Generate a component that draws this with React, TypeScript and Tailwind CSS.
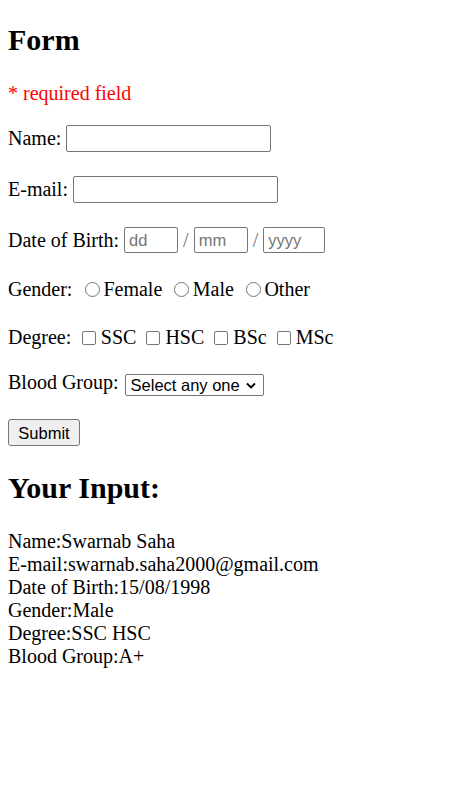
import React from 'react';

const serif = "font-['Liberation_Serif','Times_New_Roman',serif]";
const sans = "font-['Liberation_Sans',Arial,sans-serif]";

const RESULTS = [
  'Name:Swarnab Saha',
  'E-mail:swarnab.saha2000@gmail.com',
  'Date of Birth:15/08/1998',
  'Gender:Male',
  'Degree:SSC HSC',
  'Blood Group:A+',
];

function TextBox({ width, placeholder, className = '' }: { width: string; placeholder?: string; className?: string }) {
  return (
    <input
      type="text"
      placeholder={placeholder}
      className={`${width} ${sans} shrink-0 rounded-[2px] border border-[#767676] bg-white px-[4px] text-[16.5px] text-black outline-none placeholder:text-[#757575] ${className}`}
    />
  );
}

function Radio({ label, first }: { label: string; first?: boolean }) {
  return (
    <label className="flex items-center">
      <span
        className={`${first ? 'ml-[12.5px]' : 'ml-[12px]'} mr-[3.5px] h-[15px] w-[15px] rounded-full border border-[#767676] bg-white`}
      />
      <span>{label}</span>
    </label>
  );
}

function Check({ label, first }: { label: string; first?: boolean }) {
  return (
    <label className="flex items-center">
      <span
        className={`${first ? 'ml-[10.5px]' : 'ml-[10px]'} mr-[5px] h-[14px] w-[14px] rounded-[2px] border border-[#767676] bg-white`}
      />
      <span>{label}</span>
    </label>
  );
}

export default function App() {
  return (
    <div className={`${serif} min-h-[803px] bg-white pl-[8px] pt-[23px] text-[20px] leading-[23px] text-black`}>
      <h2 className="text-[30px] font-bold leading-[34px]">Form</h2>
      <p className="mt-[25px] text-[#ff0000]">* required field</p>

      <form onSubmit={(e) => e.preventDefault()}>
        <div className="mt-[20px] flex h-[27px] items-center">
          <span>Name:</span>
          <TextBox width="w-[205px]" className="ml-[5px] h-[27px]" />
        </div>

        <div className="mt-[24px] flex h-[27px] items-center">
          <span>E-mail:</span>
          <TextBox width="w-[205px]" className="ml-[5px] h-[27px]" />
        </div>

        <div className="mt-[24px] flex h-[26px] items-center">
          <span>Date of Birth:</span>
          <TextBox width="w-[54px]" placeholder="dd" className="ml-[5px] h-[26px]" />
          <span className="mx-[5px] text-[#757575]">/</span>
          <TextBox width="w-[54px]" placeholder="mm" className="h-[26px]" />
          <span className="mx-[5px] text-[#757575]">/</span>
          <TextBox width="w-[62px]" placeholder="yyyy" className="h-[26px]" />
        </div>

        <div className="mt-[25px] flex h-[23px] items-center">
          <span>Gender:</span>
          <Radio label="Female" first />
          <Radio label="Male" />
          <Radio label="Other" />
        </div>

        <div className="mt-[25px] flex h-[23px] items-center">
          <span>Degree:</span>
          <Check label="SSC" first />
          <Check label="HSC" />
          <Check label="BSc" />
          <Check label="MSc" />
        </div>

        <div className="mt-[22px] flex items-start">
          <span>Blood Group:</span>
          <div
            className={`${sans} ml-[6px] mt-[3px] flex h-[22px] w-[139px] items-center justify-between rounded-[2px] border border-[#767676] bg-white pl-[5px] pr-[7px] text-[16.5px] leading-[20px]`}
          >
            <span>Select any one</span>
            <svg width="10" height="7" viewBox="0 0 10 7" fill="none" stroke="black" strokeWidth="1.8">
              <path d="M1 1.5 L5 5.5 L9 1.5" />
            </svg>
          </div>
        </div>

        <button
          type="submit"
          className={`${sans} mt-[23px] flex h-[27px] w-[72px] items-center justify-center rounded-[3px] border border-[#767676] bg-[#efefef] text-[16.5px] leading-[20px] text-black`}
        >
          Submit
        </button>
      </form>

      <h2 className="mt-[25px] text-[30px] font-bold leading-[34px]">Your Input:</h2>
      <div className="mt-[25px]">
        {RESULTS.map((line) => (
          <div key={line}>{line}</div>
        ))}
      </div>
    </div>
  );
}
